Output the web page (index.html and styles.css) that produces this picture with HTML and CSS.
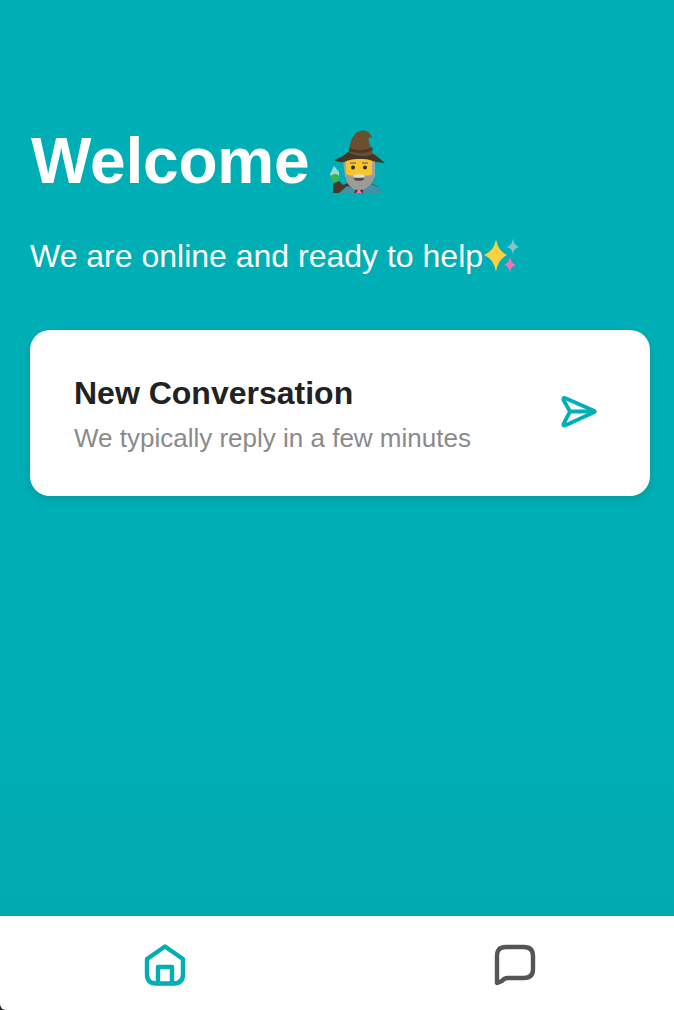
FILE: index.html

```html
<!DOCTYPE html>
<html lang="en">
<head>
    <meta charset="UTF-8">
    <meta name="viewport" content="width=device-width, initial-scale=1.0">
    <link rel="stylesheet" href="styles.css">
    <title>Welcome</title>
</head>
<body>
<div class="app">
    <main class="accueil">
        <h1 class="titre">Welcome
            <svg class="sorcier" viewBox="0 0 56 64" width="56" height="64" role="img" aria-label="mage">
                <!-- bras et robe -->
                <path d="M3 64 L3 55 L9 52 L13 56 L18 54 L40 54 L47 57 L52 64 Z" fill="#4e3627"/>
                <path d="M9 64 L17 57 L26 60 L24 64 Z" fill="#3f93a6"/>
                <path d="M33 64 L33 59 L41 55 L48 58 L52 64 Z" fill="#3f93a6"/>
                <path d="M26 64 L29 60 L32 64 Z" fill="#f07ab8"/>
                <!-- cristal -->
                <path d="M0 45 L4 37 L9 43 L9 47 L1 47 Z" fill="#9ad9d6"/>
                <ellipse cx="5" cy="49" rx="4.500" ry="4" fill="#3db44f"/>
                <!-- visage et barbe -->
                <path d="M13 31 H45 V48 H15 Z" fill="#a3a3a0"/>
                <path d="M16 30 H42 V44 Q42 50 29 50 Q16 50 16 44 Z" fill="#f9c52c"/>
                <path d="M16 45 C21 48 24 46 29 46 C34 46 38 48 44 45 C45 53 38 61 29 61 C20 61 15 53 16 45 Z" fill="#9b9b98"/>
                <ellipse cx="29" cy="50" rx="5" ry="1.800" fill="#4d4a48"/>
                <ellipse cx="29" cy="47" rx="6" ry="1.800" fill="#dcdcd8"/>
                <path d="M20 34 H26 M32 34 H38" stroke="#8a7a5a" stroke-width="1.500"/>
                <circle cx="23" cy="38.500" r="2" fill="#33261f"/>
                <circle cx="35" cy="38.500" r="2" fill="#33261f"/>
                <!-- chapeau -->
                <path d="M18 26 C20 14 22 4 30 2 C35 0 41 3 42 9 C39 7 38 9 39 13 L44 28 L17 30 Z" fill="#6a4f30"/>
                <path d="M20 19 C26 22 36 22 42 18 L43 21 C36 25 26 25 19 22 Z" fill="#4f3a24"/>
                <path d="M4 31 C10 29 15 26 18 23 C26 28 36 28 44 25 L55 34 C50 33.500 46 33 43 32 C34 29 24 29 14 33 C11 33.500 8 33 4 31 Z" fill="#473421"/>
            </svg>
        </h1>
        <p class="soustitre">We are online and ready to help<svg class="etoiles" viewBox="0 0 37 36" width="37" height="36" role="img" aria-label="sparkles">
                <path d="M13 1 C14.500 9 17 13 24 17 C17 21 14.500 26 13 34 C11.500 26 9 21 1 17 C9 13 11.500 9 13 1 Z" fill="#f9d244"/>
                <path d="M30 0 C30.500 5 32 7 36 9 C32 10.500 30.500 12 30 17 C29.500 12 28 10.500 24 9 C28 7 29.500 5 30 0 Z" fill="#7cc8cc"/>
                <path d="M27 18 C27.500 23 29 25 33 27 C29 28.500 27.500 30 27 36 C26.500 30 25 28.500 21 27 C25 25 26.500 23 27 18 Z" fill="#ee76b8"/>
            </svg></p>

        <section class="carte">
            <div class="carte-texte">
                <h2 class="carte-titre">New Conversation</h2>
                <p class="carte-note">We typically reply in a few minutes</p>
            </div>
            <svg class="icone-envoi" viewBox="0 0 36 34" width="36" height="34" fill="none" stroke="#00aeb5" stroke-width="3.800" stroke-linecap="round" stroke-linejoin="round">
                <path d="M4 3 L33.500 16 Q34 16.500 33.500 17 L4 30.500 Q2 31 2.500 29 L9 16.500 L2.500 5 Q2 2.500 4 3 Z"/>
                <path d="M9 16.500 H33"/>
            </svg>
        </section>
    </main>

    <nav class="barre">
        <svg class="icone" viewBox="0 0 42 42" width="42" height="42" fill="none" stroke="#00aeb5" stroke-width="4.400" stroke-linecap="round" stroke-linejoin="round">
            <path d="M3 15 L21 2.500 L39 15 V30 Q39 39.500 30 39.500 H12 Q3 39.500 3 30 Z"/>
            <path d="M14 39 V23 H28 V39"/>
        </svg>
        <svg class="icone" viewBox="0 0 42 42" width="42" height="42" fill="none" stroke="#555555" stroke-width="4.400" stroke-linecap="round" stroke-linejoin="round">
            <path d="M3 39 V12 Q3 3 12 3 H30 Q39 3 39 12 V25 Q39 34 30 34 H14 Q10 34 8 37 Z"/>
        </svg>
    </nav>
</div>
</body>
</html>
```

FILE: styles.css

```css
* {
    box-sizing: border-box;
}

html, body {
    margin: 0;
    height: 100%;
}

body {
    background-color: #222222;
    font-family: "Liberation Sans", Arial, sans-serif;
}

.app {
    height: 1010px;
    display: flex;
    flex-direction: column;
}

.accueil {
    flex: 1;
    background: linear-gradient(#00aeb5 80%, #00aab0);
    padding: 129px 24px 0 31px;
}

.titre {
    margin: 0;
    height: 64px;
    display: flex;
    align-items: center;
    gap: 21px;
    font-size: 64px;
    line-height: 64px;
    letter-spacing: -0.2px;
    color: #ffffff;
}

.soustitre {
    margin: 44px 0 0 -1px;
    height: 38px;
    display: flex;
    align-items: center;
    font-size: 32px;
    color: #ffffff;
}

.etoiles {
    flex: none;
}

.carte {
    margin: 55px 0 0 -1px;
    height: 166px;
    padding: 2px 53px 0 44px;
    display: flex;
    align-items: center;
    justify-content: space-between;
    background-color: #ffffff;
    border-radius: 20px;
    box-shadow: 0 4px 10px rgba(0, 0, 0, 0.1);
}

.carte-titre {
    margin: 0;
    font-size: 32px;
    line-height: 36px;
    color: #222222;
}

.carte-note {
    margin: 12px 0 0 0;
    font-size: 26px;
    line-height: 30px;
    color: #8a8a8a;
}

.icone-envoi {
    margin-bottom: 4px;
}

.barre {
    height: 94px;
    padding: 28px 138px 0 144px;
    display: flex;
    align-items: flex-start;
    justify-content: space-between;
    background-color: #ffffff;
    border-bottom-left-radius: 6px;
}
```
